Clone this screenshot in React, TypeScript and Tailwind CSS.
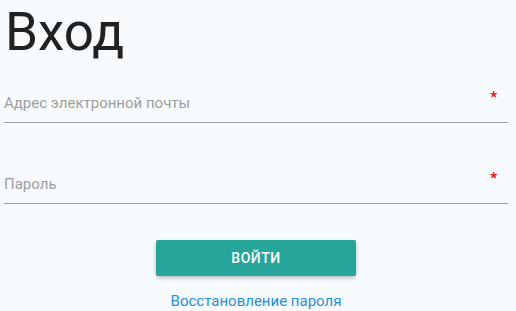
import React from "react";

export default function App() {
  return (
    <div className="w-[516px] h-[311px] overflow-hidden bg-[#f7fbfe] font-['Roboto',sans-serif]">
      <div className="pl-[4px] pr-[8px]">
        <h1 className="pt-[2px] text-[53px] leading-[60px] font-normal text-[#212121] pl-[1px]">Вход</h1>
        <div className="mt-[22px] relative h-[39px] border-b border-[#9e9e9e] flex items-center">
          <span className="text-[15px] text-[#9e9e9e] leading-[18px]">Адрес электронной почты</span>
          <span className="absolute right-[11px] top-[6px] text-[#f00] text-[15px] leading-[15px] font-bold">*</span>
        </div>
        <div className="mt-[42px] relative h-[39px] border-b border-[#9e9e9e] flex items-center">
          <span className="text-[15px] text-[#9e9e9e] leading-[18px]">Пароль</span>
          <span className="absolute right-[11px] top-[6px] text-[#f00] text-[15px] leading-[15px] font-bold">*</span>
        </div>
        <div className="flex flex-col items-center">
          <button className="mt-[36px] w-[200px] h-[36px] bg-[#26a69a] text-white rounded-[2px] text-[14px] font-medium tracking-[0.5px] uppercase shadow-[0_2px_4px_rgba(0,0,0,0.25)]">
            Войти
          </button>
          <a className="mt-[16px] text-[15px] leading-[18px] text-[#2590dc]">Восстановление пароля</a>
        </div>
      </div>
    </div>
  );
}
